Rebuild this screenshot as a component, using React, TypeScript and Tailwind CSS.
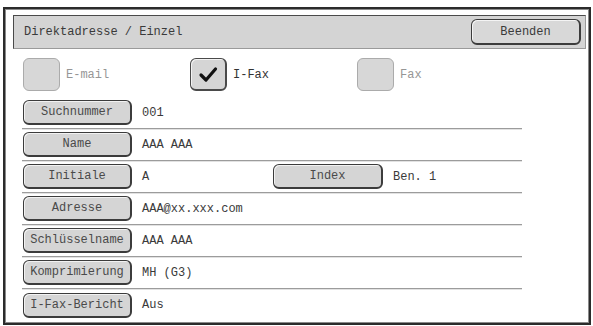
import React from "react";

const mono = { fontFamily: '"Liberation Mono", "DejaVu Sans Mono", monospace' };

function Btn({ label, w = "w-[109px]" }: { label: string; w?: string }) {
  return (
    <div
      className={`${w} h-[25px] shrink-0 flex items-center justify-center rounded-[6px] border border-[#3c3c3c] border-r-2 border-b-2 bg-[#d5d5d5] shadow-[inset_1px_1px_0_#f2f2f2] text-[12px] text-[#4a4a4a] leading-none`}
    >
      {label}
    </div>
  );
}

function Row({ label, value, last, children }: { label: string; value: string; last?: boolean; children?: React.ReactNode }) {
  return (
    <div
      className={`w-[500px] h-[32px] flex items-center pl-[1px] ${last ? "" : "border-b border-[#9c9c9c] shadow-[0_1px_0_#e2e2e2]"}`}
    >
      <Btn label={label} />
      <span className="ml-[10px] text-[12px] text-[#3a3a3a] whitespace-pre w-[131px]">{value}</span>
      {children}
    </div>
  );
}

function Check({ label, checked, disabled }: { label: string; checked?: boolean; disabled?: boolean }) {
  return (
    <div className="w-[167px] flex items-center shrink-0">
      {disabled ? (
        <div className="w-[37px] h-[33px] rounded-[6px] border border-[#ababab] bg-[#d7d7d7]" />
      ) : (
        <div className="w-[37px] h-[33px] rounded-[6px] border border-[#4a4a4a] border-r-2 border-b-2 bg-[#d5d5d5] shadow-[inset_1px_1px_0_#f2f2f2] flex items-center justify-center">
          {checked && (
            <svg width="24" height="20" viewBox="0 0 24 20">
              <path d="M5 11 L10 16 L19.5 5" fill="none" stroke="#111" strokeWidth="3.2" strokeLinecap="round" strokeLinejoin="round" />
            </svg>
          )}
        </div>
      )}
      <span className={`ml-[6px] text-[12px] ${disabled ? "text-[#969696]" : "text-[#333]"}`}>{label}</span>
    </div>
  );
}

export default function App() {
  return (
    <div className="w-[593px] h-[326px] bg-white pt-[7px] pl-[3px]" style={mono}>
      <div className="w-[588px] h-[318px] border-2 border-[#2b2b2b] shadow-[inset_0_0_0_1px_#8a8a8a] pt-[6px] pl-[8px]">
        <div className="w-[573px] h-[34px] bg-[#d4d4d4] border border-t-[#4a4a4a] border-l-[#4a4a4a] border-r-[#9a9a9a] border-b-[#9a9a9a] flex items-center justify-between pl-[10px] pr-[4px]">
          <span className="text-[12px] text-[#3a3a3a]">Direktadresse / Einzel</span>
          <div className="w-[110px] h-[26px] flex items-center justify-center rounded-[6px] border border-[#3c3c3c] border-r-2 border-b-2 bg-[#d8d8d8] shadow-[inset_1px_1px_0_#f4f4f4] text-[12px] text-[#3a3a3a]">
            Beenden
          </div>
        </div>
        <div className="flex mt-[9px] ml-[10px]">
          <Check label="E-mail" disabled />
          <Check label="I-Fax" checked />
          <Check label="Fax" disabled />
        </div>
        <div className="flex flex-col mt-[6px] ml-[9px]">
          <Row label="Suchnummer" value="001" />
          <Row label="Name" value="AAA AAA" />
          <Row label="Initiale" value="A">
            <Btn label="Index" w="w-[110px]" />
            <span className="ml-[10px] text-[12px] text-[#3a3a3a]">Ben. 1</span>
          </Row>
          <Row label="Adresse" value="AAA@xx.xxx.com" />
          <Row label="Schlüsselname" value="AAA AAA" />
          <Row label="Komprimierung" value="MH (G3)" />
          <Row label="I-Fax-Bericht" value="Aus" last />
        </div>
      </div>
    </div>
  );
}
